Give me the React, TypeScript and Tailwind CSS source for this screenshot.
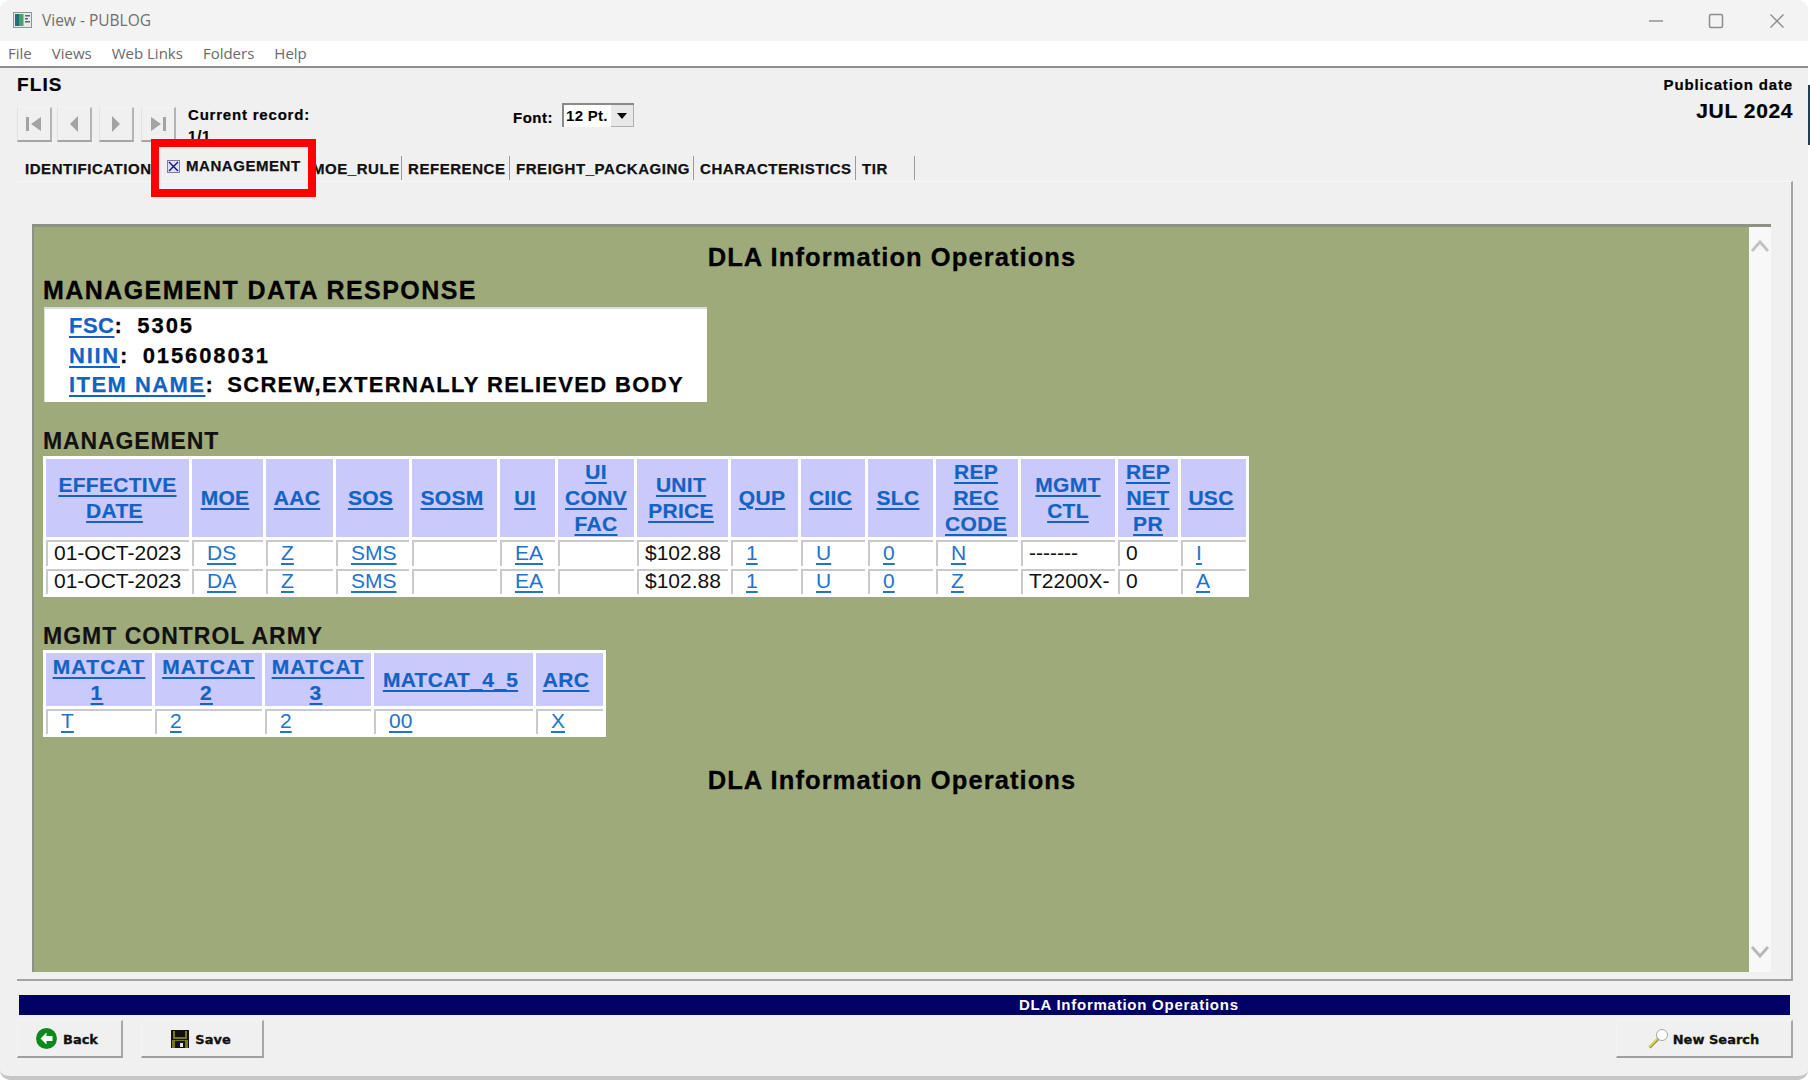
import React from "react";

const cols1 = ["w-[143px]","w-[71px]","w-[67px]","w-[73px]","w-[85px]","w-[55px]","w-[76px]","w-[91px]","w-[67px]","w-[64px]","w-[65px]","w-[82px]","w-[94px]","w-[60px]","w-[65px]"];
const head1: string[][] = [["EFFECTIVE","DATE"],["MOE"],["AAC"],["SOS"],["SOSM"],["UI"],["UI","CONV","FAC"],["UNIT","PRICE"],["QUP"],["CIIC"],["SLC"],["REP","REC","CODE"],["MGMT","CTL"],["REP","NET","PR"],["USC"]];
const pad1 = ["", "pr-[5px]", "pr-[5px]", "pr-[4px]", "pr-[5px]", "pr-[5px]", "", "pr-[3px]", "pr-[5px]", "pr-[5px]", "pr-[5px]", "pr-[2px]", "", "", "pr-[5px]"];
type Cell = { t: string; link?: boolean };
const L = (t: string): Cell => ({ t, link: true });
const P = (t: string): Cell => ({ t });
const rows1: Cell[][] = [
  [P("01-OCT-2023"),L("DS"),L("Z"),L("SMS"),P(""),L("EA"),P(""),P("$102.88"),L("1"),L("U"),L("0"),L("N"),P("-------"),P("0"),L("I")],
  [P("01-OCT-2023"),L("DA"),L("Z"),L("SMS"),P(""),L("EA"),P(""),P("$102.88"),L("1"),L("U"),L("0"),L("Z"),P("T2200X-"),P("0"),L("A")],
];
const cols2 = ["w-[106px]","w-[107px]","w-[106px]","w-[159px]","w-[67px]"];
const head2: string[][] = [["MATCAT","1"],["MATCAT","2"],["MATCAT","3"],["MATCAT_4_5"],["ARC"]];
const pad2 = ["tracking-[1.2px]", "tracking-[1.2px]", "tracking-[1.2px]", "pr-[6px]", "pr-[7px]"];
const rows2: Cell[][] = [[L("T"),L("2"),L("2"),L("00"),L("X")]];

const LINE_PAD: Record<string, string> = { DATE: "pr-[6px]", "1": "pr-[4px]", "2": "pr-[4px]", "3": "pr-[4px]" };

function DataTable({ width, cols, head, pads, rows, headH, rowHs }: { width: string; cols: string[]; head: string[][]; pads: string[]; rows: Cell[][]; headH: string; rowHs: string[] }) {
  return (
    <table className={`table-fixed border-separate border-spacing-[3px] bg-white ${width}`}>
      <colgroup>{cols.map((c, i) => <col key={i} className={c} />)}</colgroup>
      <thead>
        <tr className={headH}>
          {head.map((lines, i) => (
            <th key={i} className={`bg-[#c9c9fb] p-0 text-center align-middle text-[21px] font-bold leading-[26px] tracking-[0.3px] text-[#1362c4] [-webkit-text-stroke:0.2px] ${pads[i]}`}>
              {lines.map((l, j) => (
                <div key={j} className={LINE_PAD[l] ?? ""}><a className="underline underline-offset-[3px]">{l}</a></div>
              ))}
            </th>
          ))}
        </tr>
      </thead>
      <tbody>
        {rows.map((r, i) => (
          <tr key={i} className={rowHs[i]}>
            {r.map((c, j) => (
              <td key={j} className={`whitespace-nowrap border-l-2 border-t-2 border-[#cacaca] bg-white p-0 pb-[4px] align-middle text-[21px] leading-[19px] ${c.link ? "pl-[13px] text-[#2273cc]" : "pl-[6px] text-[#111]"}`}>
                {c.link ? <a className="underline underline-offset-[3px]">{c.t}</a> : c.t}
              </td>
            ))}
          </tr>
        ))}
      </tbody>
    </table>
  );
}

function NavIcon({ kind }: { kind: "first" | "prev" | "next" | "last" }) {
  return (
    <svg width="20" height="20" viewBox="0 0 20 20" fill="#a3a3a3">
      {kind === "first" && <><rect x="2" y="3" width="3" height="14" /><path d="M17 3v14L7 10z" /></>}
      {kind === "prev" && <path d="M14 2v16L6 10z" />}
      {kind === "next" && <path d="M6 2v16l8-8z" />}
      {kind === "last" && <><rect x="15" y="3" width="3" height="14" /><path d="M3 3v14l10-7z" /></>}
    </svg>
  );
}

function NavButton({ kind, extra }: { kind: "first" | "prev" | "next" | "last"; extra: string }) {
  return (
    <button className={`flex h-[35px] w-[35px] items-center justify-center border-b-2 border-l border-r-2 border-t border-b-[#a4a4a4] border-l-[#e2e2e2] border-r-[#b4b4b4] border-t-[#f4f4f4] ${extra}`}>
      <NavIcon kind={kind} />
    </button>
  );
}

function Tab({ label, className }: { label: string; className: string }) {
  return <div className={`flex h-[24px] items-center whitespace-nowrap ${className}`}>{label}</div>;
}

function BottomButton({ label, icon, className }: { label: string; icon: React.ReactNode; className: string }) {
  return (
    <button className={`flex h-[38px] items-center justify-center border-b-2 border-r-2 border-l border-t border-b-[#9f9f9f] border-r-[#a8a8a8] border-l-[#f4f4f4] border-t-[#f4f4f4] font-['DejaVu_Sans',sans-serif] text-[13px] font-bold text-[#111] ${className}`}>
      {icon}
      <span className="pt-[2px] [-webkit-text-stroke:0.3px]">{label}</span>
    </button>
  );
}

export default function App() {
  return (
    <div className="relative h-[1080px] w-[1810px] overflow-hidden bg-white font-['Liberation_Sans',Arial,sans-serif] text-black">
      <div className="absolute right-0 top-[85px] h-[60px] w-[2px] bg-[#16405c]" />
      <div className="flex h-[1080px] w-[1808px] flex-col overflow-hidden rounded-[10px] border-b-4 border-[#c6c6c6] bg-[#f0f0f0]">
        {/* Title bar */}
        <div className="flex h-[41px] shrink-0 items-center bg-[#f3f3f3] pl-[13px] pr-[23px] font-['Open_Sans',sans-serif]">
          <svg width="19" height="16" viewBox="0 0 19 16" className="mt-[-1px]">
            <rect x="0.5" y="0.5" width="18" height="15" fill="#e8eaea" stroke="#8d9494" />
            <rect x="2" y="2" width="4" height="12" fill="#1f6f7d" />
            <rect x="6" y="2" width="4.5" height="12" fill="#4aa06a" />
            <rect x="12" y="3" width="5" height="1.5" fill="#567" />
            <rect x="12" y="6" width="3" height="1.5" fill="#567" />
            <rect x="12" y="9" width="5" height="1.5" fill="#567" />
          </svg>
          <span className="ml-[10px] text-[15.5px] text-[#6f6f6f]">View - PUBLOG</span>
          <div className="ml-auto flex items-center">
            <svg width="16" height="16" viewBox="0 0 16 16" fill="none" stroke="#8c8c8c" strokeWidth="1.4"><path d="M1 8h14" /></svg>
            <svg width="16" height="16" viewBox="0 0 16 16" fill="none" stroke="#8c8c8c" strokeWidth="1.5" className="ml-[44px]"><rect x="1.5" y="1.5" width="13" height="13" rx="1.5" /></svg>
            <svg width="16" height="16" viewBox="0 0 16 16" fill="none" stroke="#8c8c8c" strokeWidth="1.4" className="ml-[45px]"><path d="M1.5 1.5l13 13M14.5 1.5l-13 13" /></svg>
          </div>
        </div>
        {/* Menu */}
        <div className="flex h-[27px] shrink-0 items-center gap-[20px] border-b-2 border-[#8e8e8e] bg-white pl-[8px] font-['Open_Sans',sans-serif] text-[15px] text-[#6a6a6a]">
          <span>File</span><span>Views</span><span>Web Links</span><span>Folders</span><span>Help</span>
        </div>
        {/* Header */}
        <div className="flex h-[88px] shrink-0 justify-between pl-[17px] pr-[15px]">
          <div>
            <div className="mt-[6px] text-[19px] font-bold leading-[22px] tracking-[1.1px] [-webkit-text-stroke:0.2px]">FLIS</div>
            <div className="mt-[11px] flex items-start">
              <NavButton kind="first" extra="" />
              <NavButton kind="prev" extra="ml-[5px]" />
              <NavButton kind="next" extra="ml-[7px]" />
              <NavButton kind="last" extra="ml-[7px]" />
              <div className="ml-[12px] w-[325px] text-[15px] font-bold leading-[20px] tracking-[0.8px] [-webkit-text-stroke:0.2px]">
                <div className="mt-[-2px]">Current record:</div>
                <div className="pt-[1px]">1/1</div>
              </div>
              <div className="mt-[1px] w-[49px] text-[15px] font-bold leading-[20px] tracking-[0.5px] [-webkit-text-stroke:0.2px]">Font:</div>
              <div className="mt-[-4px] flex h-[24px] w-[72px] items-center border-l-2 border-t-2 border-[#8a8a8a] bg-white pl-[2px] text-[15px] font-bold tracking-[0.3px]">
                <span className="w-[45px]">12 Pt.</span>
                <span className="flex h-full flex-1 items-center justify-center border-b border-r border-[#b0b0b0] bg-[#e8e8e8]">
                  <svg width="10" height="6" viewBox="0 0 10 6"><path d="M0 0h10L5 6z" fill="#000" /></svg>
                </span>
              </div>
            </div>
          </div>
          <div className="flex flex-col items-end [-webkit-text-stroke:0.2px]">
            <div className="mt-[7px] text-[15px] font-bold leading-[20px] tracking-[0.85px]">Publication date</div>
            <div className="mt-[3px] text-[21px] font-bold leading-[26px] tracking-[0.6px]">JUL 2024</div>
          </div>
        </div>
        {/* Tabs */}
        <div className="flex h-[25px] shrink-0 items-start pl-[17px] text-[15px] font-bold tracking-[0.55px] text-[#111] [-webkit-text-stroke:0.25px]">
          <Tab label="IDENTIFICATION" className="w-[135px] overflow-hidden pl-[8px] pt-[2px]" />
          <div className="flex h-[24px] w-[160px] items-center pl-[15px] pb-[3px]">
            <span className="flex h-[13px] w-[13px] items-center justify-center border border-[#7d7d9a] bg-[#dfe3f5]">
              <svg width="11" height="11" viewBox="0 0 11 11" fill="none" stroke="#101080" strokeWidth="1.4"><path d="M1 1l9 9M10 1l-9 9" /></svg>
            </span>
            <span className="ml-[6px]">MANAGEMENT</span>
          </div>
          <Tab label="MOE_RULE" className="w-[90px] border-r border-[#9a9a9a] pl-0 pt-[2px]" />
          <Tab label="REFERENCE" className="w-[108px] border-r border-[#9a9a9a] pl-[6px] pt-[2px]" />
          <Tab label="FREIGHT_PACKAGING" className="w-[184px] border-r border-[#9a9a9a] pl-[6px] pt-[2px]" />
          <Tab label="CHARACTERISTICS" className="w-[162px] border-r border-[#9a9a9a] pl-[6px] pt-[2px]" />
          <Tab label="TIR" className="w-[59px] border-r border-[#9a9a9a] pl-[6px] pt-[2px]" />
        </div>
        {/* Panel */}
        <div className="ml-[17px] mr-[15px] flex min-h-0 flex-1 flex-col border-b-2 border-r-2 border-t border-b-[#a2a2a2] border-r-[#a2a2a2] border-t-[#f7f7f7] pb-[7px] pl-[15px] pr-[20px] pt-[42px]">
          <div className="flex min-h-0 flex-1 border-l-2 border-t-[3px] border-[#8d9284]">
            <div className="flex-1 bg-[#9eaa7a] pl-[9px]">
              <div className="mt-[16px] pr-[8px] text-center text-[25.5px] font-bold leading-[28px] tracking-[1.08px] [-webkit-text-stroke:0.3px]">DLA Information Operations</div>
              <div className="mt-[6px] text-[25px] font-bold leading-[26px] tracking-[1.43px] [-webkit-text-stroke:0.3px]">MANAGEMENT DATA RESPONSE</div>
              <div className="ml-[1px] mt-[4px] h-[95px] w-[663px] border-l border-t-2 border-[#dcdcdc] bg-white pl-[24px] pt-[2px] text-[22px] font-bold leading-[29.6px] tracking-[1.33px] [-webkit-text-stroke:0.25px]">
                <div>
                  <a className="tracking-[0.5px] text-[#1362c4] underline underline-offset-[3px]">FSC</a>:
                  <span className="ml-[14px] tracking-[2px]">5305</span>
                </div>
                <div>
                  <a className="tracking-[1.75px] text-[#1362c4] underline underline-offset-[3px]">NIIN</a>:
                  <span className="ml-[14px] tracking-[1.9px]">015608031</span>
                </div>
                <div>
                  <a className="tracking-[1.45px] text-[#1362c4] underline underline-offset-[3px]">ITEM NAME</a>:
                  <span className="ml-[13px]">SCREW,EXTERNALLY RELIEVED BODY</span>
                </div>
              </div>
              <div className="mt-[26px] text-[23px] font-bold leading-[26px] tracking-[0.88px] text-[#111] [-webkit-text-stroke:0.15px]">MANAGEMENT</div>
              <div className="mt-[2px]">
                <DataTable width="w-[1206px]" cols={cols1} head={head1} pads={pad1} rows={rows1} headH="h-[78px]" rowHs={["h-[26px]", "h-[25px]"]} />
              </div>
              <div className="mt-[26px] text-[23px] font-bold leading-[26px] tracking-[1px] text-[#111] [-webkit-text-stroke:0.15px]">MGMT CONTROL ARMY</div>
              <div className="mt-[1px]">
                <DataTable width="w-[563px]" cols={cols2} head={head2} pads={pad2} rows={rows2} headH="h-[53px]" rowHs={["h-[25px]"]} />
              </div>
              <div className="mt-[29px] pr-[8px] text-center text-[25.5px] font-bold leading-[28px] tracking-[1.08px] [-webkit-text-stroke:0.3px]">DLA Information Operations</div>
            </div>
            <div className="flex w-[22px] flex-col items-center justify-between bg-[#f8f8f8] pb-[13px] pt-[12px]">
              <svg width="20" height="13" viewBox="0 0 20 13" fill="none" stroke="#c4c4c4" strokeWidth="3"><path d="M2 12l8-9 8 9" /></svg>
              <svg width="20" height="13" viewBox="0 0 20 13" fill="none" stroke="#b8b8b8" strokeWidth="3"><path d="M2 1l8 9 8-9" /></svg>
            </div>
          </div>
        </div>
        {/* Status bar */}
        <div className="ml-[19px] mr-[18px] mt-[14px] flex h-[20px] shrink-0 items-center bg-[#000066] pl-[1000px] text-[15px] font-bold tracking-[0.75px] text-white">DLA Information Operations</div>
        {/* Buttons */}
        <div className="ml-[17px] mr-[15px] mt-[5px] flex shrink-0 pb-[18px]">
          <BottomButton
            label="Back"
            className="w-[106px] gap-[6px] pr-[5px]"
            icon={
              <svg width="21" height="21" viewBox="0 0 21 21">
                <circle cx="10.5" cy="10.5" r="10.5" fill="#0b8a1c" />
                <path d="M10.5 4.5L4.5 10.5l6 6V13h6V8h-6z" fill="#fff" />
              </svg>
            }
          />
          <BottomButton
            label="Save"
            className="ml-[18px] w-[123px] gap-[6px] pr-[2px]"
            icon={
              <svg width="18" height="18" viewBox="0 0 18 18">
                <rect width="18" height="18" fill="#111" />
                <rect x="2" y="1" width="14" height="8" fill="#77761e" />
                <rect x="4" y="1" width="10" height="6" fill="#111" />
                <rect x="1" y="10" width="16" height="8" fill="#77761e" />
                <rect x="4" y="11" width="10" height="7" fill="#111" />
                <rect x="9" y="13" width="3" height="4" fill="#ddd" />
              </svg>
            }
          />
          <BottomButton
            label="New Search"
            className="ml-auto w-[177px] gap-[5px] pr-[1px]"
            icon={
              <svg width="20" height="20" viewBox="0 0 20 20" fill="none">
                <path d="M11 9L1.5 18.5" stroke="#9a9a3a" strokeWidth="3" />
                <path d="M9 10L1 18" stroke="#e6e14a" strokeWidth="1.5" />
                <circle cx="14" cy="6" r="5.5" fill="#fff" stroke="#a8a8a8" />
              </svg>
            }
          />
        </div>
      </div>
      {/* Annotation box */}
      <div className="pointer-events-none absolute left-[151px] top-[139px] h-[58px] w-[165px] border-[8.5px] border-[#ff0000]" />
    </div>
  );
}
